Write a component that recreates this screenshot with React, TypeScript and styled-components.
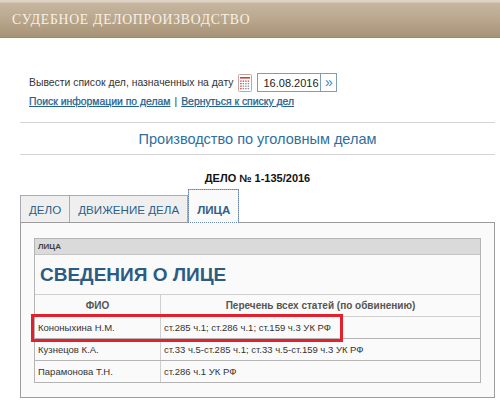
import styled, { createGlobalStyle } from 'styled-components';

const GlobalStyle = createGlobalStyle`
  html, body {
    margin: 0;
    padding: 0;
    background: #ffffff;
  }
  body {
    width: 500px;
    font-family: "Liberation Sans", Arial, sans-serif;
  }
`;

const persons = [
  { fio: 'Кононыхина Н.М.', articles: 'ст.285 ч.1; ст.286 ч.1; ст.159 ч.3 УК РФ' },
  { fio: 'Кузнецов К.А.', articles: 'ст.33 ч.5-ст.285 ч.1; ст.33 ч.5-ст.159 ч.3 УК РФ' },
  { fio: 'Парамонова Т.Н.', articles: 'ст.286 ч.1 УК РФ' },
];

const tabs = ['ДЕЛО', 'ДВИЖЕНИЕ ДЕЛА', 'ЛИЦА'];

const CalendarIcon = () => (
  <svg width='14' height='18' viewBox='0 0 14 18'>
    <rect x='0.5' y='0.5' width='13' height='17' rx='1' fill='#fff' stroke='#c4a49c' />
    <rect x='2' y='3' width='10' height='1.6' fill='#c8403a' />
    {[0, 1, 2, 3].map((r) =>
      [0, 1, 2, 3].map((c) => (
        <rect
          key={`${r}-${c}`}
          x={2.2 + c * 2.5}
          y={6.5 + r * 2.5}
          width='1.4'
          height='1.3'
          fill={c === 0 || r === 0 ? '#c8403a' : '#8a8a9a'}
        />
      ))
    )}
  </svg>
);

const App = () => {
  return (
    <>
      <GlobalStyle />
      <TopBar>
        <TopTitle>СУДЕБНОЕ ДЕЛОПРОИЗВОДСТВО</TopTitle>
      </TopBar>
      <Main>
        <DateForm>
          <DateRow>
            <DateLabel>Вывести список дел, назначенных на дату</DateLabel>
            <CalendarBtn>
              <CalendarIcon />
            </CalendarBtn>
            <DateInput defaultValue='16.08.2016' />
            <GoBtn>»</GoBtn>
          </DateRow>
          <LinkRow>
            <Link href='#'>Поиск информации по делам</Link>
            <Sep>|</Sep>
            <Link href='#'>Вернуться к списку дел</Link>
          </LinkRow>
        </DateForm>

        <SectionTitle>Производство по уголовным делам</SectionTitle>

        <CaseNumber>ДЕЛО № 1-135/2016</CaseNumber>

        <Tabs>
          {tabs.map((t, i) => (
            <Tab key={t} $active={i === 2}>
              {t}
            </Tab>
          ))}
        </Tabs>
        <Panel>
          <InnerBox>
            <BoxHead>ЛИЦА</BoxHead>
            <BigTitle>СВЕДЕНИЯ О ЛИЦЕ</BigTitle>
            <TableWrap>
              <Table>
                <thead>
                  <tr>
                    <Th $w={125}>ФИО</Th>
                    <Th>Перечень всех статей (по обвинению)</Th>
                  </tr>
                </thead>
                <tbody>
                  {persons.map((p) => (
                    <tr key={p.fio}>
                      <Td>{p.fio}</Td>
                      <Td>{p.articles}</Td>
                    </tr>
                  ))}
                </tbody>
              </Table>
              <Highlight />
            </TableWrap>
          </InnerBox>
        </Panel>
      </Main>
    </>
  );
};

export default App;

const TopBar = styled.div`
  height: 37px;
  display: flex;
  align-items: center;
  padding-left: 12px;
  background: linear-gradient(#ddd2c4 0px, #ddd2c4 2px, #c7b6a0 3px, #b9a68c 20px, #a89477 36px);
  border-bottom: 1px solid #9a8669;
`;

const TopTitle = styled.span`
  font-family: "Liberation Serif", "DejaVu Serif", serif;
  font-size: 13.7px;
  letter-spacing: 0.75px;
  color: #f7f1e6;
  padding-top: 2px;
`;

const Main = styled.div`
  margin-left: 20px;
  width: 475px;
`;

const DateForm = styled.div`
  padding: 35px 0 0 9px;
`;

const DateRow = styled.div`
  display: flex;
  align-items: center;
  height: 19px;
`;

const DateLabel = styled.span`
  font-size: 10.4px;
  color: #333;
  margin-right: 5px;
`;

const CalendarBtn = styled.span`
  display: flex;
  margin-right: 5px;
`;

const DateInput = styled.input`
  box-sizing: border-box;
  width: 64px;
  height: 19px;
  border: 1px solid #7f9db9;
  font-family: "Liberation Sans", Arial, sans-serif;
  font-size: 11px;
  padding: 0 0 0 5px;
  color: #222;
  outline: none;
`;

const GoBtn = styled.span`
  box-sizing: border-box;
  width: 16px;
  height: 19px;
  border: 1px solid #7f9db9;
  border-left: none;
  display: flex;
  align-items: center;
  justify-content: center;
  color: #3b7fc4;
  font-size: 14px;
  line-height: 1;
  padding-bottom: 2px;
`;

const LinkRow = styled.div`
  display: flex;
  align-items: center;
  height: 13px;
  margin-top: 3px;
  font-size: 10.4px;
`;

const Link = styled.a`
  color: #23628f;
  text-decoration: underline;
  -webkit-text-stroke: 0.25px #23628f;
`;

const Sep = styled.span`
  color: #333;
  margin: 0 4px;
`;

const SectionTitle = styled.div`
  margin-top: 14px;
  border-top: 1px solid #d4d4d4;
  border-bottom: 1px solid #d4d4d4;
  height: 31px;
  display: flex;
  align-items: center;
  justify-content: center;
  font-size: 14.5px;
  color: #2e6f9e;
`;

const CaseNumber = styled.div`
  text-align: center;
  font-weight: bold;
  font-size: 11px;
  line-height: 14px;
  color: #111;
  margin-top: 16px;
`;

const Tabs = styled.div`
  display: flex;
  align-items: flex-end;
  height: 33px;
  margin-top: 4px;
  position: relative;
  z-index: 1;
`;

const Tab = styled.div<{ $active?: boolean }>`
  box-sizing: border-box;
  height: ${(p) => (p.$active ? '34px' : '27px')};
  margin-bottom: ${(p) => (p.$active ? '-1px' : '0')};
  padding: ${(p) => (p.$active ? '6px 8px 0' : '0 8px')};
  display: flex;
  align-items: center;
  font-size: ${(p) => (p.$active ? '11.5px' : '11.6px')};
  color: #2e5f8a;
  font-weight: ${(p) => (p.$active ? 'bold' : 'normal')};
  background: ${(p) => (p.$active ? '#fafafa' : '#efefef')};
  border: 1px solid #a9a9b8;
  border-left: ${(p) => (p.$active ? '1px solid #a9a9b8' : 'none')};
  border-bottom: none;
  outline: ${(p) => (p.$active ? '1px dotted #6c87b0' : 'none')};
  outline-offset: -1px;
  &:first-child {
    border-left: 1px solid #a9a9b8;
  }
`;

const Panel = styled.div`
  box-sizing: border-box;
  height: 176px;
  border: 1px solid #9c9c9c;
  background: #fafafa;
  padding: 15px 13px 0 13px;
`;

const InnerBox = styled.div`
  border: 1px solid #b4b4b4;
  border-bottom: none;
  background: #fafafa;
`;

const BoxHead = styled.div`
  height: 15px;
  background: #dadada;
  border-bottom: 1px solid #c4c4c4;
  font-size: 8px;
  font-weight: bold;
  color: #444;
  padding-left: 3px;
  display: flex;
  align-items: center;
`;

const BigTitle = styled.div`
  box-sizing: border-box;
  height: 40px;
  font-size: 19px;
  line-height: 22px;
  font-weight: bold;
  color: #2b5c86;
  padding: 9px 0 0 5px;
  border-bottom: 1px solid #cfcfcf;
`;

const TableWrap = styled.div`
  position: relative;
`;

const Table = styled.table`
  width: 100%;
  border-collapse: collapse;
  font-size: 9.5px;
`;

const Th = styled.th<{ $w?: number }>`
  width: ${(p) => (p.$w ? `${p.$w}px` : 'auto')};
  height: 21px;
  padding: 0;
  font-size: 10px;
  font-weight: bold;
  color: #555;
  border-bottom: 1px solid #cfcfcf;
  & + & {
    border-left: 1px solid #cfcfcf;
  }
`;

const Td = styled.td`
  height: 21px;
  padding: 0 0 0 3px;
  color: #333;
  border-bottom: 1px solid #b4b4b4;
  & + & {
    border-left: 1px solid #cfcfcf;
  }
`;

const Highlight = styled.div`
  position: absolute;
  left: -4px;
  top: 19px;
  width: 312px;
  height: 28px;
  box-sizing: border-box;
  border: 3px solid #e3202b;
`;
